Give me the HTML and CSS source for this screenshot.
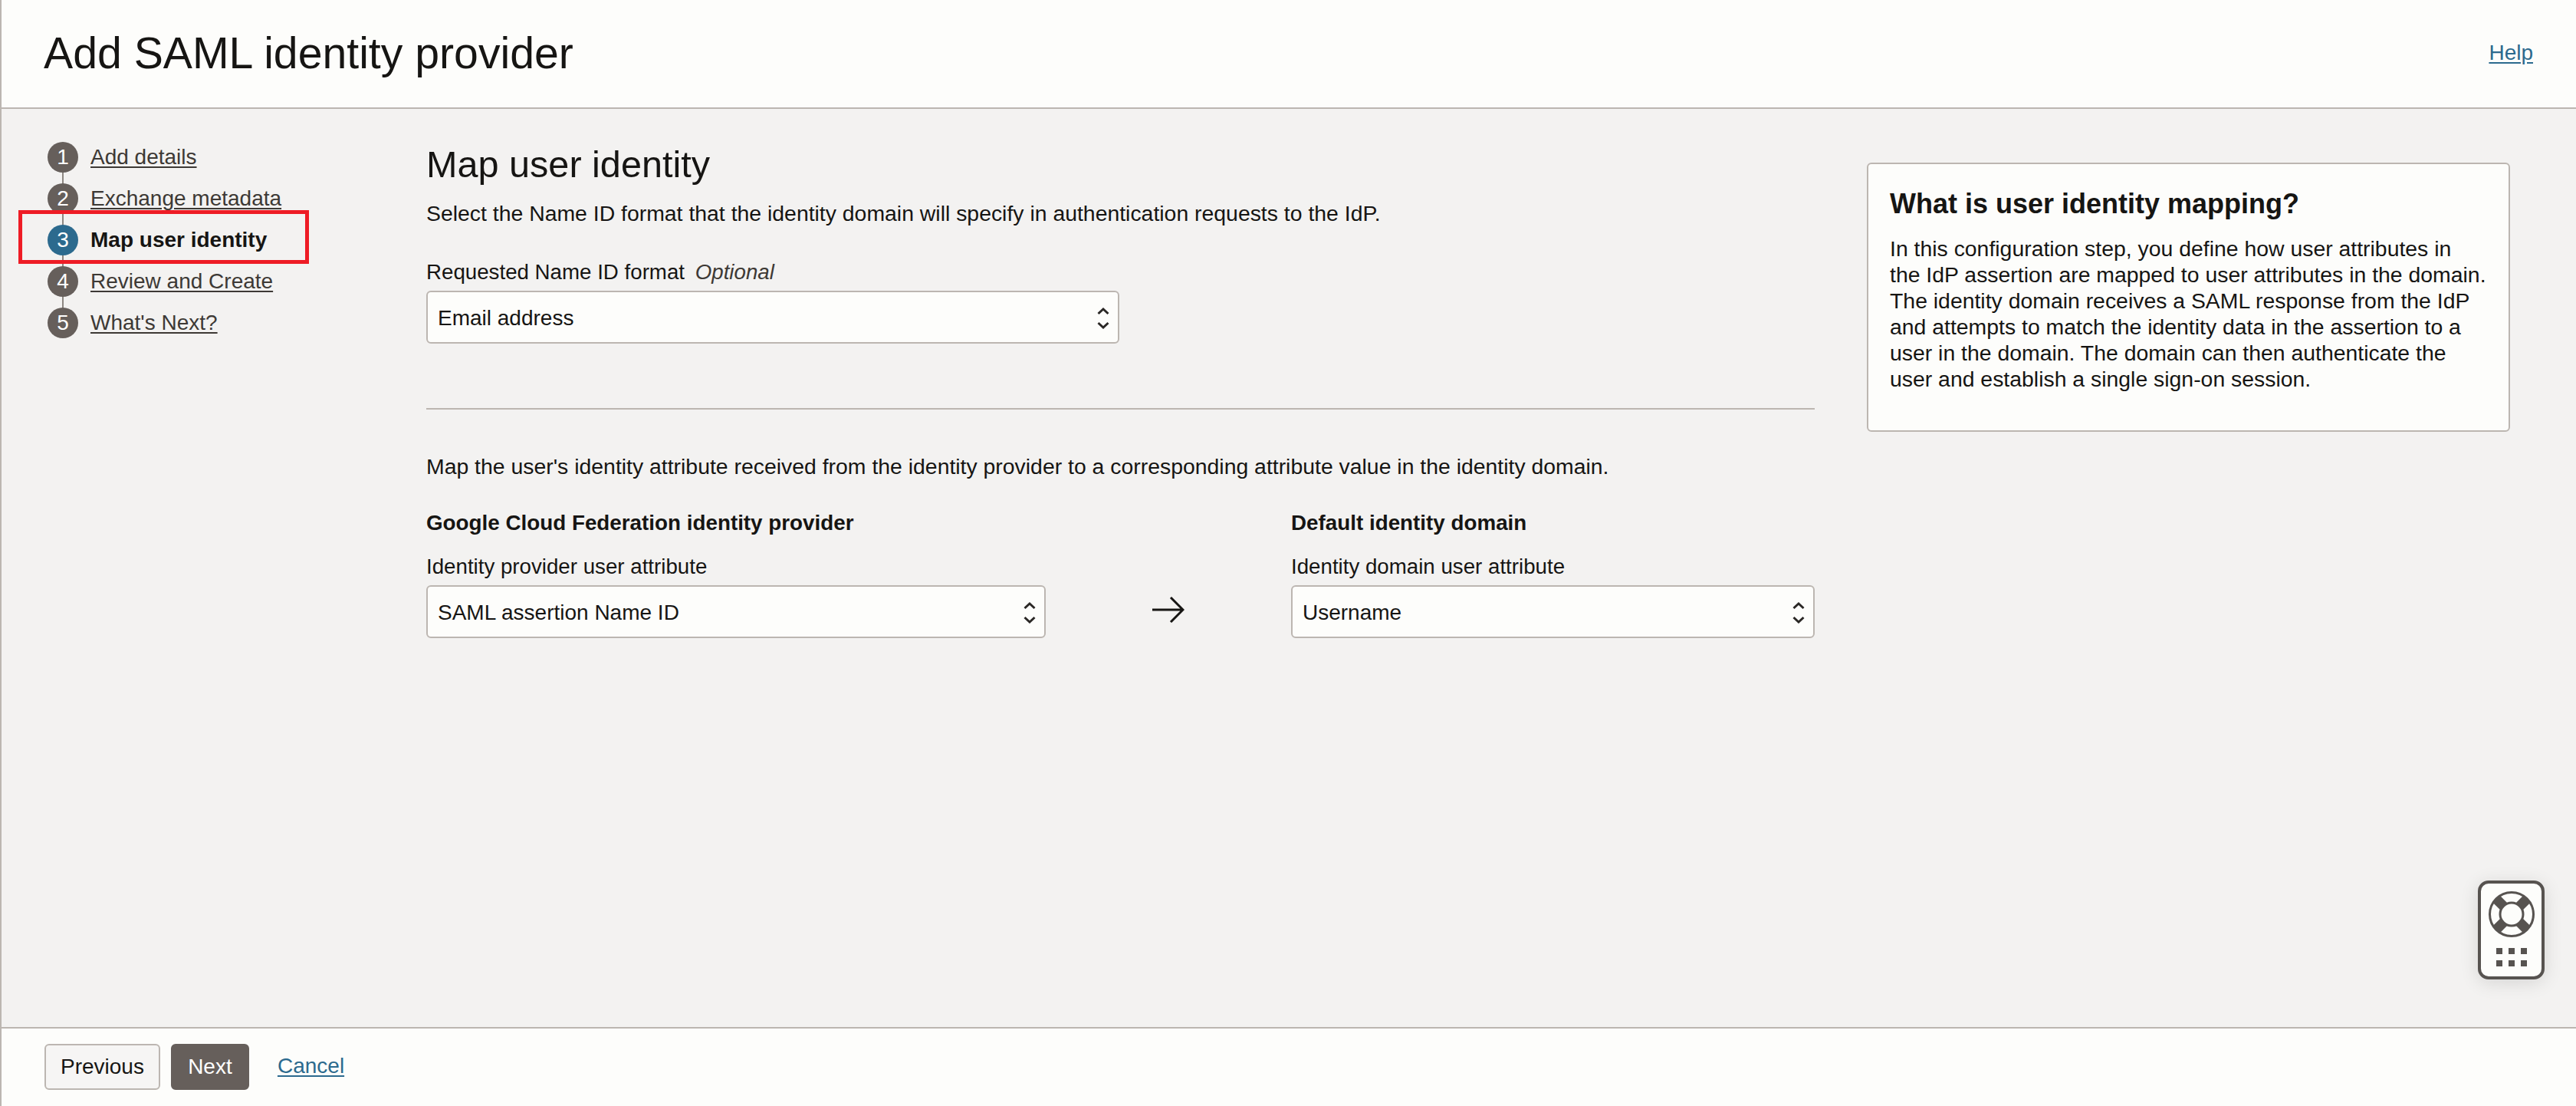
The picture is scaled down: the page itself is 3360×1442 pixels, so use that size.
FILE: index.html
```html
<!DOCTYPE html>
<html lang="en">
<head>
<meta charset="utf-8">
<title>Add SAML identity provider</title>
<link rel="stylesheet" href="styles.css">
</head>
<body>
<div class="page">
  <header class="top">
    <h1 class="title">Add SAML identity provider</h1>
    <a class="link help" href="#">Help</a>
  </header>
  <main class="main">
    <nav class="steps">
      <div class="step"><span class="num">1</span><a class="step-link" href="#">Add details</a></div>
      <div class="step"><span class="num">2</span><a class="step-link" href="#">Exchange metadata</a></div>
      <div class="step current"><span class="num">3</span><span class="step-link">Map user identity</span></div>
      <div class="step"><span class="num">4</span><a class="step-link" href="#">Review and Create</a></div>
      <div class="step"><span class="num">5</span><a class="step-link" href="#">What's Next?</a></div>
    </nav>
    <section class="content">
      <h2 class="heading">Map user identity</h2>
      <p class="intro">Select the Name ID format that the identity domain will specify in authentication requests to the IdP.</p>
      <div class="field format">
        <div class="label">Requested Name ID format <em class="optional">Optional</em></div>
        <div class="select"><span>Email address</span>
          <svg class="updown" viewBox="0 0 18 30"><path d="M2.5 9 9 3l6.500 6M2.500 21 9 27l6.500-6"/></svg>
        </div>
      </div>
      <hr class="rule">
      <p class="intro map">Map the user's identity attribute received from the identity provider to a corresponding attribute value in the identity domain.</p>
      <div class="mapping">
        <div class="col left">
          <h3 class="sub">Google Cloud Federation identity provider</h3>
          <div class="label">Identity provider user attribute</div>
          <div class="select"><span>SAML assertion Name ID</span>
            <svg class="updown" viewBox="0 0 18 30"><path d="M2.5 9 9 3l6.500 6M2.500 21 9 27l6.500-6"/></svg>
          </div>
        </div>
        <svg class="arrow" viewBox="0 0 42 34"><path d="M0 17h40M24 1l16 16-16 16"/></svg>
        <div class="col right">
          <h3 class="sub">Default identity domain</h3>
          <div class="label">Identity domain user attribute</div>
          <div class="select"><span>Username</span>
            <svg class="updown" viewBox="0 0 18 30"><path d="M2.5 9 9 3l6.500 6M2.500 21 9 27l6.500-6"/></svg>
          </div>
        </div>
      </div>
    </section>
    <aside class="card">
      <h3 class="card-title">What is user identity mapping?</h3>
      <p class="card-text">In this configuration step, you define how user attributes in<br>the IdP assertion are mapped to user attributes in the domain.<br>The identity domain receives a SAML response from the IdP<br>and attempts to match the identity data in the assertion to a<br>user in the domain. The domain can then authenticate the<br>user and establish a single sign-on session.</p>
    </aside>
  </main>
  <footer class="bottom">
    <button class="btn" type="button">Previous</button>
    <button class="btn primary" type="button">Next</button>
    <a class="link cancel" href="#">Cancel</a>
  </footer>
  <div class="highlight"></div>
  <div class="widget">
    <svg class="buoy" viewBox="0 0 60 60">
      <circle class="buoy-ring" cx="30" cy="30" r="28.500"/>
      <path class="buoy-band" d="M9.800 9.800 21 21M50.200 9.800 39 21M9.800 50.200 21 39M50.200 50.200 39 39"/>
      <circle class="buoy-inner" cx="30" cy="30" r="15"/>
    </svg>
    <div class="dots"><i></i><i></i><i></i><i></i><i></i><i></i></div>
  </div>
</div>
</body>
</html>
```
FILE: styles.css
```css
* { box-sizing: border-box; }
html, body { margin: 0; height: 100%; }
body {
  font-family: "Liberation Sans", Arial, sans-serif;
  font-size: 28px;
  color: #161513;
  background: #f3f2f1;
}
.page {
  position: relative;
  height: 1442px;
  display: flex;
  flex-direction: column;
  border-left: 2px solid #bcb6b1;
  overflow: hidden;
}
.top {
  height: 142px;
  flex: none;
  display: flex;
  justify-content: space-between;
  align-items: center;
  padding: 0 56px 2px 55px;
  background: #fdfdfb;
  border-bottom: 2px solid #bcb6b1;
}
.title { margin: 0; font-size: 57.2px; font-weight: 400; line-height: 66px; }
.link { color: #2c6a8e; text-decoration: underline; text-underline-offset: 3px; }
.help { font-size: 28px; }
.main {
  flex: 1;
  display: flex;
  align-items: flex-start;
  padding: 36px 0 0 60px;
}
.steps { width: 494px; flex: none; }
.step {
  position: relative;
  display: flex;
  align-items: center;
  gap: 16px;
  height: 54px;
}
.step::before {
  content: "";
  position: absolute;
  left: 19px;
  top: 0;
  bottom: 0;
  width: 2px;
  background: #8d8782;
}
.step:first-child::before { top: 27px; }
.step:last-child::before { bottom: 27px; }
.num {
  position: relative;
  width: 40px;
  height: 40px;
  flex: none;
  display: flex;
  align-items: center;
  justify-content: center;
  border-radius: 50%;
  background: #665f5b;
  color: #fff;
  font-size: 28px;
}
.step-link { color: #3d3935; text-decoration: underline; text-underline-offset: 3px; }
.current .num { background: #2c6a8e; }
.current .step-link { color: #161513; font-weight: 700; text-decoration: none; }
.content { width: 1811px; flex: none; }
.heading { margin: 8px 0 0; font-size: 48.6px; font-weight: 400; line-height: 56px; }
.intro { margin: 18px 0 0; font-size: 28.4px; line-height: 36px; }
.format { margin-top: 41px; width: 904px; }
.label { font-size: 27.7px; line-height: 36px; margin-bottom: 6px; }
.optional { margin-left: 6px; color: #3d3935; }
.select {
  height: 69px;
  display: flex;
  align-items: center;
  justify-content: space-between;
  padding: 2px 10px 0 13px;
  background: #fdfdfb;
  border: 2px solid #bcb6b1;
  border-radius: 6px;
}
.updown { width: 18px; height: 30px; flex: none; }
.updown path { fill: none; stroke: #2a2725; stroke-width: 3; }
.rule { margin: 84px 0 0; border: 0; height: 2px; background: #bcb6b1; }
.intro.map { margin-top: 56px; }
.mapping { margin-top: 38px; display: flex; align-items: flex-start; }
.col.left { width: 808px; }
.col.right { width: 683px; margin-left: 320px; }
.sub { margin: 0 0 21px; font-size: 27.8px; font-weight: 700; line-height: 36px; }
.arrow {
  width: 42px;
  height: 34px;
  flex: none;
  margin: 114px 0 0 139px;
  margin-right: -181px;
}
.arrow path { fill: none; stroke: #161513; stroke-width: 3; }
.card {
  width: 839px;
  height: 351px;
  flex: none;
  margin: 34px 0 0 68px;
  padding: 30px 28px;
  background: #fdfdfb;
  border: 2px solid #bcb6b1;
  border-radius: 6px;
}
.card-title { margin: 0; font-size: 36px; font-weight: 700; line-height: 44px; }
.card-text { margin: 19px 0 0; font-size: 28.4px; line-height: 34px; }
.bottom {
  height: 103px;
  flex: none;
  display: flex;
  align-items: flex-start;
  padding: 20px 0 0 56px;
  background: #fdfdfb;
  border-top: 2px solid #bcb6b1;
}
.btn {
  height: 60px;
  font: inherit;
  border-radius: 6px;
  border: 2px solid #bcb6b1;
  background: #f6f5f4;
  color: #161513;
  padding: 0 19px;
}
.btn.primary {
  margin-left: 14px;
  background: #665f5b;
  border-color: #665f5b;
  color: #fff;
  width: 102px;
  padding: 0;
}
.cancel { margin: 13px 0 0 37px; }
.highlight {
  position: absolute;
  left: 22px;
  top: 274px;
  width: 379px;
  height: 70px;
  border: 5px solid #ee1c25;
}
.widget {
  position: absolute;
  left: 3230px;
  top: 1148px;
  width: 87px;
  height: 129px;
  padding: 10px 9px 0;
  background: #fdfdfb;
  border: 4px solid #575350;
  border-radius: 14px;
  box-shadow: 0 4px 24px rgba(0,0,0,.12);
}
.buoy { display: block; width: 60px; height: 60px; margin: 0 auto; }
.buoy-ring { fill: #fdfdfb; stroke: #575350; stroke-width: 3; }
.buoy-band { fill: none; stroke: #575350; stroke-width: 13; }
.buoy-inner { fill: #fdfdfb; stroke: #575350; stroke-width: 3; }
.dots {
  margin: 14px auto 0;
  width: 40px;
  display: grid;
  grid-template-columns: repeat(3, 8px);
  justify-content: space-between;
  row-gap: 8px;
}
.dots i { display: block; height: 8px; background: #575350; }
```
